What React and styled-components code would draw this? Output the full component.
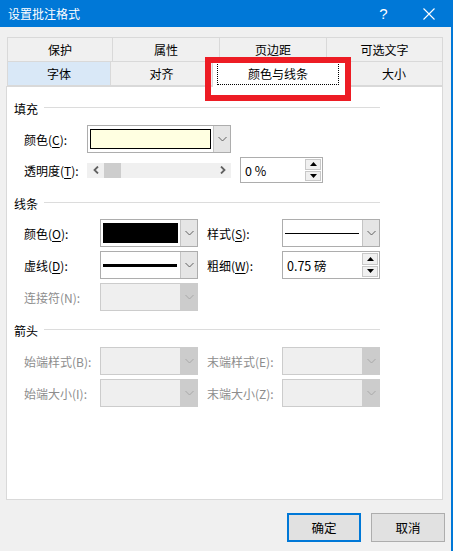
import React from "react";
import styled, { createGlobalStyle } from "styled-components";

const GlobalStyle = createGlobalStyle`
  html, body {
    margin: 0;
    padding: 0;
    background: #f0f0f0;
  }
  body {
    font-family: "Noto Sans CJK SC", "Noto Sans", sans-serif;
    font-size: 12px;
    color: #000;
  }
`;

const Dialog = styled.div`
  position: relative;
  width: 453px;
  height: 551px;
  box-sizing: border-box;
  background: #f0f0f0;
  border-right: 2px solid #0078d7;
  display: flex;
  flex-direction: column;
`;

const TitleBar = styled.div`
  height: 27px;
  background: #0078d7;
  color: #fff;
  display: flex;
  align-items: center;
  padding-left: 8px;
`;

const Title = styled.div`
  flex: 1;
  font-size: 12px;
`;

const TitleButton = styled.div`
  width: 45px;
  height: 27px;
  display: flex;
  align-items: center;
  justify-content: center;
  font-size: 15px;
  font-family: "Liberation Sans", sans-serif;
`;

const Tabs = styled.div`
  margin: 10px 0 0 7px;
  display: flex;
  flex-direction: column;
`;

const TabRow = styled.div`
  display: flex;
  height: 25px;
  margin-top: ${(p) => p.$top || 0}px;
  align-items: flex-start;
`;

const Tab = styled.div`
  width: ${(p) => p.$w}px;
  height: 25px;
  box-sizing: border-box;
  border: 1px solid #d9d9d9;
  margin-left: -1px;
  background: ${(p) => (p.$hover ? "#d9e8f7" : "#f0f0f0")};
  display: flex;
  align-items: center;
  justify-content: center;
  &:first-child {
    margin-left: 0;
  }
`;

const ActiveTab = styled.div`
  position: relative;
  z-index: 1;
  width: ${(p) => p.$w}px;
  height: 26px;
  box-sizing: border-box;
  margin-left: -1px;
  border: 1px solid #d9d9d9;
  border-bottom: none;
  background: #fff;
  padding: 0 6px 2px 4px;
  display: flex;
`;

const FocusRing = styled.div`
  flex: 1;
  border: 1px dotted #000;
  display: flex;
  align-items: center;
  justify-content: center;
`;

const Panel = styled.div`
  margin-left: 6px;
  width: 437px;
  height: 414px;
  box-sizing: border-box;
  border: 1px solid #d9d9d9;
  background: #fff;
  padding: 13px 0 0 7px;
  display: flex;
  flex-direction: column;
`;

const SectionHead = styled.div`
  display: flex;
  align-items: center;
  width: 366px;
  height: 16px;
  margin-top: ${(p) => p.$top || 0}px;
  &::after {
    content: "";
    flex: 1;
    height: 1px;
    margin: -2px 0 0 6px;
    background: #dcdcdc;
  }
`;

const Row = styled.div`
  display: flex;
  align-items: center;
  height: ${(p) => p.$h || 28}px;
  padding-left: 10px;
  margin-top: ${(p) => p.$top || 0}px;
`;

const Label = styled.div`
  width: ${(p) => p.$w}px;
  margin-left: ${(p) => p.$ml || 0}px;
  color: ${(p) => (p.$disabled ? "#8d8d8d" : "#000")};
  white-space: nowrap;
  u {
    text-decoration-thickness: 1px;
    text-underline-offset: 2px;
  }
`;

const Combo = styled.div`
  width: ${(p) => p.$w}px;
  height: 28px;
  box-sizing: border-box;
  border: 1px solid ${(p) => (p.$disabled ? "#cccccc" : "#adadad")};
  background: ${(p) => (p.$disabled ? "#efefef" : "#fff")};
  display: flex;
`;

const ComboField = styled.div`
  flex: 1;
  padding: 3px 2px;
  display: flex;
  align-items: center;
`;

const ComboButton = styled.div`
  width: 16px;
  border-left: 1px solid ${(p) => (p.$disabled ? "#cccccc" : "#c4c4c4")};
  background: ${(p) => (p.$disabled ? "#cccccc" : "#e5e5e5")};
  display: flex;
  align-items: center;
  justify-content: center;
`;

const Swatch = styled.div`
  flex: 1;
  align-self: stretch;
  box-sizing: border-box;
  border: 1px solid #000;
  background: ${(p) => p.$color};
`;

const LineSample = styled.div`
  flex: 1;
  height: ${(p) => p.$h}px;
  background: #000;
  margin-right: 1px;
`;

const ScrollBar = styled.div`
  width: 144px;
  height: 15px;
  background: #f0f0f0;
  display: flex;
`;

const ScrollArrow = styled.div`
  width: 17px;
  display: flex;
  align-items: center;
  justify-content: center;
`;

const ScrollThumb = styled.div`
  width: 17px;
  background: #cdcdcd;
`;

const ScrollTrack = styled.div`
  flex: 1;
`;

const Spin = styled.div`
  width: ${(p) => p.$w}px;
  height: ${(p) => p.$h}px;
  margin-left: ${(p) => p.$ml || 0}px;
  box-sizing: border-box;
  border: 1px solid #adadad;
  background: #fff;
  display: flex;
`;

const SpinText = styled.div`
  flex: 1;
  padding-left: 4px;
  display: flex;
  align-items: center;
  font-size: 12.5px;
`;

const SpinButtons = styled.div`
  width: 17px;
  padding: 1px 1px 1px 0;
  box-sizing: border-box;
  display: flex;
  flex-direction: column;
  gap: 1px;
`;

const SpinButton = styled.div`
  flex: 1;
  border: 1px solid #c8c8c8;
  background: #f0f0f0;
  display: flex;
  align-items: center;
  justify-content: center;
`;

const Footer = styled.div`
  display: flex;
  justify-content: flex-end;
  gap: 10px;
  margin-top: 13px;
  padding-right: 6px;
`;

const Button = styled.div`
  width: 74px;
  height: 29px;
  box-sizing: border-box;
  border: ${(p) => (p.$primary ? "2px solid #0078d7" : "1px solid #adadad")};
  background: #e1e1e1;
  display: flex;
  align-items: center;
  justify-content: center;
  font-size: 12.5px;
`;

const Annotation = styled.div`
  position: absolute;
  left: 205px;
  top: 57px;
  width: 146px;
  height: 44px;
  box-sizing: border-box;
  border: 6px solid #ed1c24;
  z-index: 2;
  pointer-events: none;
`;

const Chevron = ({ color = "#606060" }) => (
  <svg width="9" height="6" viewBox="0 0 9 6">
    <polyline points="0.5,1 4.5,5 8.5,1" fill="none" stroke={color} strokeWidth="1" />
  </svg>
);

const Arrow = ({ dir }) => (
  <svg width="6" height="8" viewBox="0 0 6 8">
    <polyline
      points={dir === "left" ? "5,0.5 1.5,4 5,7.5" : "1,0.5 4.5,4 1,7.5"}
      fill="none"
      stroke="#606060"
      strokeWidth="1.8"
    />
  </svg>
);

const Triangle = ({ up }) => (
  <svg width="7" height="4" viewBox="0 0 7 4">
    <polygon points={up ? "3.5,0 7,4 0,4" : "0,0 7,0 3.5,4"} fill="#000" />
  </svg>
);

const DropDown = ({ w, disabled, children }) => (
  <Combo $w={w} $disabled={disabled}>
    <ComboField>{children}</ComboField>
    <ComboButton $disabled={disabled}>
      <Chevron color={disabled ? "#a8a8a8" : "#606060"} />
    </ComboButton>
  </Combo>
);

const SpinBox = ({ w, h, ml, value }) => (
  <Spin $w={w} $h={h} $ml={ml}>
    <SpinText>{value}</SpinText>
    <SpinButtons>
      <SpinButton>
        <Triangle up />
      </SpinButton>
      <SpinButton>
        <Triangle />
      </SpinButton>
    </SpinButtons>
  </Spin>
);

export default function App() {
  return (
    <>
      <GlobalStyle />
      <Dialog>
        <TitleBar>
          <Title>设置批注格式</Title>
          <TitleButton>?</TitleButton>
          <TitleButton>
            <svg width="12" height="12" viewBox="0 0 12 12">
              <path d="M0.5 0.5 L11.5 11.5 M11.5 0.5 L0.5 11.5" stroke="#fff" strokeWidth="1.1" />
            </svg>
          </TitleButton>
        </TitleBar>

        <Tabs>
          <TabRow>
            <Tab $w={106}>保护</Tab>
            <Tab $w={108}>属性</Tab>
            <Tab $w={108}>页边距</Tab>
            <Tab $w={117}>可选文字</Tab>
          </TabRow>
          <TabRow $top={-1}>
            <Tab $w={104} $hover>字体</Tab>
            <Tab $w={103}>对齐</Tab>
            <ActiveTab $w={134}>
              <FocusRing>颜色与线条</FocusRing>
            </ActiveTab>
            <Tab $w={98}>大小</Tab>
          </TabRow>
        </Tabs>

        <Panel>
          <SectionHead>填充</SectionHead>
          <Row $top={9}>
            <Label $w={63}>
              颜色(<u>C</u>):
            </Label>
            <DropDown w={144}>
              <Swatch $color="#ffffe1" />
            </DropDown>
          </Row>
          <Row $top={4} $h={26}>
            <Label $w={63}>
              透明度(<u>T</u>):
            </Label>
            <ScrollBar>
              <ScrollArrow>
                <Arrow dir="left" />
              </ScrollArrow>
              <ScrollThumb />
              <ScrollTrack />
              <ScrollArrow>
                <Arrow dir="right" />
              </ScrollArrow>
            </ScrollBar>
            <SpinBox w={83} h={26} ml={9} value="0 %" />
          </Row>

          <SectionHead $top={12}>线条</SectionHead>
          <Row $top={8}>
            <Label $w={76}>
              颜色(<u>O</u>):
            </Label>
            <DropDown w={98}>
              <Swatch $color="#000" />
            </DropDown>
            <Label $w={75} $ml={9}>
              样式(<u>S</u>):
            </Label>
            <DropDown w={98}>
              <LineSample $h={1} />
            </DropDown>
          </Row>
          <Row $top={4}>
            <Label $w={76}>
              虚线(<u>D</u>):
            </Label>
            <DropDown w={98}>
              <LineSample $h={3} />
            </DropDown>
            <Label $w={75} $ml={9}>
              粗细(<u>W</u>):
            </Label>
            <SpinBox w={98} h={28} value="0.75 磅" />
          </Row>
          <Row $top={4}>
            <Label $w={76} $disabled>
              连接符(N):
            </Label>
            <DropDown w={98} disabled />
          </Row>

          <SectionHead $top={11}>箭头</SectionHead>
          <Row $top={9}>
            <Label $w={76} $disabled>
              始端样式(B):
            </Label>
            <DropDown w={98} disabled />
            <Label $w={75} $ml={9} $disabled>
              末端样式(E):
            </Label>
            <DropDown w={98} disabled />
          </Row>
          <Row $top={4}>
            <Label $w={76} $disabled>
              始端大小(I):
            </Label>
            <DropDown w={98} disabled />
            <Label $w={75} $ml={9} $disabled>
              末端大小(Z):
            </Label>
            <DropDown w={98} disabled />
          </Row>
        </Panel>

        <Footer>
          <Button $primary>确定</Button>
          <Button>取消</Button>
        </Footer>

        <Annotation />
      </Dialog>
    </>
  );
}
